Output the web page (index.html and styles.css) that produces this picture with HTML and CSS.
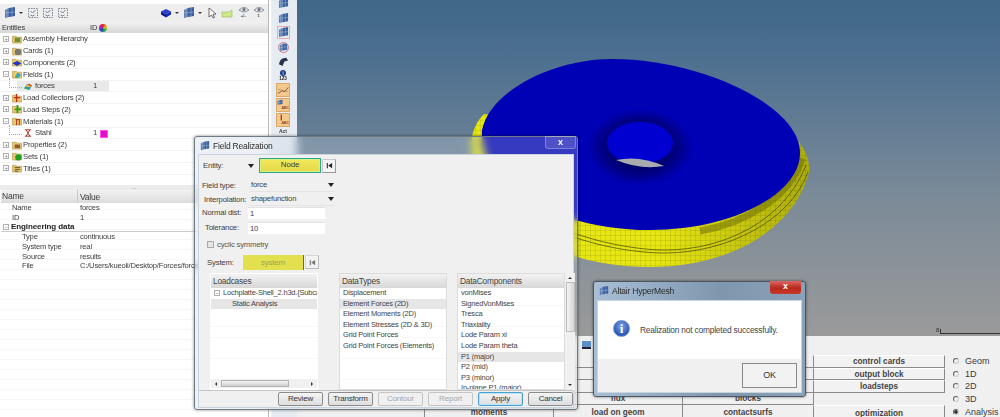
FILE: index.html
```html
<!DOCTYPE html>
<html lang="en">
<head>
<meta charset="utf-8">
<title>Altair HyperMesh</title>
<link rel="stylesheet" href="styles.css">
</head>
<body>
<svg class="defs" width="0" height="0" aria-hidden="true">
  <defs>
    <symbol id="sheet" viewBox="0 0 12 12"><path d="M1 3l4-2v9l-4 1z" fill="#5b7fb5"/><path d="M5 1l6-1v9l-6 1z" fill="#3a5f9c"/><path d="M3 1.500v9M8 .5v9M1 6l10-1" stroke="#9fb4d4" stroke-width=".6" fill="none"/></symbol>
    <symbol id="cube" viewBox="0 0 12 12"><path d="M6 2l5 2.500-5 2.500-5-2.500z" fill="#2c3fd0"/><path d="M1 4.500v3l5 3v-3.500z" fill="#10208f"/><path d="M11 4.500v3l-5 3v-3.500z" fill="#182ab0"/></symbol>
    <symbol id="dash" viewBox="0 0 12 12"><path d="M1.500 1.500h9v9h-9z" fill="none" stroke="#7c8794" stroke-dasharray="1.500 1"/><path d="M3.500 4l2 2 3-3M3.500 8l2 1 2-1" fill="none" stroke="#59636f" stroke-width=".8"/></symbol>
    <symbol id="eye" viewBox="0 0 12 8"><path d="M1 4q5-5 10 0q-5 4-10 0z" fill="#dfe3e6" stroke="#7c8288" stroke-width=".8"/><circle cx="6" cy="3.500" r="1.500" fill="#6a7178"/></symbol>
    <symbol id="folder" viewBox="0 0 11 11"><path d="M.5 2.500h4l1 1h5v6.500h-10z" fill="#e9c76c" stroke="#a98b3a" stroke-width=".6"/></symbol>
    <symbol id="card" viewBox="0 0 11 11"><use href="#folder"/><circle cx="6.500" cy="6.500" r="3.500" fill="#777"/></symbol>
    <symbol id="comp" viewBox="0 0 11 11"><use href="#folder"/><path d="M5.500 4.500l5 2.500-5 3-5-3z" fill="#1f37c0"/></symbol>
    <symbol id="asm" viewBox="0 0 11 11"><use href="#folder"/><path d="M3 4h6v5H3z" fill="#6f8f3e"/></symbol>
    <symbol id="field" viewBox="0 0 11 11"><use href="#folder"/><path d="M3 9l3-5 4 2-3 4z" fill="#37a0c8"/><path d="M3 9l3-2 1 3z" fill="#49b649"/></symbol>
    <symbol id="force" viewBox="0 0 11 11"><path d="M1 8l4-5 5 2-3 5z" fill="#2f8fd0"/><path d="M3 6l3-3 4 2-2 2z" fill="#f0d030"/><path d="M5 4l2-1 3 2-2 1z" fill="#e04a20"/><path d="M1 8l3-1 3 3z" fill="#3cb43c"/></symbol>
    <symbol id="load" viewBox="0 0 11 11"><use href="#folder"/><path d="M5 1v9M2 5h7" stroke="#c02818" stroke-width="1.400"/></symbol>
    <symbol id="step" viewBox="0 0 11 11"><use href="#folder"/><path d="M6 1v9M3 6h7" stroke="#28a028" stroke-width="2"/></symbol>
    <symbol id="mat" viewBox="0 0 11 11"><use href="#folder"/><path d="M4 4h5M5 4v6M8 4v6" stroke="#a03020" stroke-width="1" fill="none"/></symbol>
    <symbol id="steel" viewBox="0 0 11 11"><path d="M2 2h7M2 9h7M3.500 2l4 7M7.500 2l-4 7" stroke="#9c2b22" stroke-width="1" fill="none"/></symbol>
    <symbol id="prop" viewBox="0 0 11 11"><use href="#folder"/><path d="M3 5h6v4H3z" fill="#8a5c3a"/></symbol>
    <symbol id="set" viewBox="0 0 11 11"><use href="#folder"/><circle cx="7" cy="7" r="3.500" fill="#1fa01f"/></symbol>
    <symbol id="title" viewBox="0 0 11 11"><use href="#folder"/><path d="M3 5h6M3 7h6M3 9h4" stroke="#333" stroke-width=".8"/></symbol>
    <symbol id="first" viewBox="0 0 8 8"><path d="M1.500 1v6" stroke="#222" stroke-width="1.200"/><path d="M7 1v6L2.500 4z" fill="#222"/></symbol>
    <pattern id="mesh" width="5" height="5" patternUnits="userSpaceOnUse"><rect width="5" height="5" fill="#e6e612"/><path d="M0 0v5M0 0h5" stroke="#9a9a10" stroke-width=".5"/></pattern>
    <radialGradient id="holeShade"><stop offset=".5" stop-color="#00006a"/><stop offset=".75" stop-color="#000088"/><stop offset="1" stop-color="#0000b4"/></radialGradient>
    <linearGradient id="sideShade" x1="0" x2="1" y1="0" y2="0"><stop offset=".55" stop-color="#000" stop-opacity="0"/><stop offset="1" stop-color="#000" stop-opacity=".25"/></linearGradient>
  </defs>
</svg>

<div class="app">
  <aside class="side">
    <div class="panel">
      <div class="toolbar">
        <svg class="tb"><use href="#sheet"/></svg><span class="drop"></span>
        <svg class="tb"><use href="#dash"/></svg><svg class="tb"><use href="#dash"/></svg><svg class="tb"><use href="#dash"/></svg>
        <span class="grow"></span>
        <svg class="tb"><use href="#cube"/></svg><span class="drop"></span>
        <svg class="tb"><use href="#sheet"/></svg><span class="drop"></span>
        <svg class="tb" viewBox="0 0 12 12"><path d="M3 1v9l2.500-2 1.500 3 1.500-.7-1.500-3 3-.3z" fill="#fff" stroke="#333" stroke-width=".7"/></svg>
        <svg class="tb" viewBox="0 0 12 12"><path d="M1 5h7l3-2v7H1z" fill="#cfe88a" stroke="#98b45a" stroke-width=".6"/></svg>
        <span class="eyebox"><svg class="eye"><use href="#eye"/></svg><i>+/–</i></span>
        <span class="eyebox"><svg class="eye"><use href="#eye"/></svg><i>1</i></span>
      </div>
      <div class="treehead"><span class="th-name">Entities</span><span class="th-id">ID</span><span class="wheel"></span></div>
      <div class="tree">
        <div class="row"><b class="exp">+</b><svg class="ic"><use href="#asm"/></svg><span class="lbl">Assembly Hierarchy</span></div>
        <div class="row"><b class="exp">+</b><svg class="ic"><use href="#card"/></svg><span class="lbl">Cards (1)</span></div>
        <div class="row"><b class="exp">+</b><svg class="ic"><use href="#comp"/></svg><span class="lbl">Components (2)</span></div>
        <div class="row"><b class="exp">–</b><svg class="ic"><use href="#field"/></svg><span class="lbl">Fields (1)</span></div>
        <div class="row child sel"><svg class="ic"><use href="#force"/></svg><span class="lbl">forces</span><span class="idv">1</span></div>
        <div class="row"><b class="exp">+</b><svg class="ic"><use href="#load"/></svg><span class="lbl">Load Collectors (2)</span></div>
        <div class="row"><b class="exp">+</b><svg class="ic"><use href="#step"/></svg><span class="lbl">Load Steps (2)</span></div>
        <div class="row"><b class="exp">–</b><svg class="ic"><use href="#mat"/></svg><span class="lbl">Materials (1)</span></div>
        <div class="row child"><svg class="ic"><use href="#steel"/></svg><span class="lbl">Stahl</span><span class="idv">1</span><span class="swatch"></span></div>
        <div class="row"><b class="exp">+</b><svg class="ic"><use href="#prop"/></svg><span class="lbl">Properties (2)</span></div>
        <div class="row"><b class="exp">+</b><svg class="ic"><use href="#set"/></svg><span class="lbl">Sets (1)</span></div>
        <div class="row"><b class="exp">+</b><svg class="ic"><use href="#title"/></svg><span class="lbl">Titles (1)</span></div>
      </div>
      <div class="sash">...</div>
      <div class="props">
        <div class="prophead"><span class="pn">Name</span><span class="pv">Value</span></div>
        <div class="prow"><span class="pn ind1">Name</span><span class="pv">forces</span></div>
        <div class="prow"><span class="pn ind1">ID</span><span class="pv">1</span></div>
        <div class="prow group"><b class="exp">–</b><strong>Engineering data</strong></div>
        <div class="prow"><span class="pn ind2">Type</span><span class="pv">continuous</span></div>
        <div class="prow"><span class="pn ind2">System type</span><span class="pv">real</span></div>
        <div class="prow"><span class="pn ind2">Source</span><span class="pv">results</span></div>
        <div class="prow"><span class="pn ind2">File</span><span class="pv">C:/Users/kueoli/Desktop/Forces/forces.csv</span></div>
      </div>
    </div>
    <div class="strip">
      <svg class="si"><use href="#sheet"/></svg>
      <svg class="si"><use href="#sheet"/></svg>
      <svg class="si ringed"><use href="#sheet"/></svg>
      <svg class="si circled"><use href="#sheet"/></svg>
      <svg class="si small" viewBox="0 0 12 12"><path d="M1 9q1-7 8-7l2 3-4 1-2 5z" fill="#26324e"/></svg>
      <span class="info-s">i</span>
      <span class="num">123</span>
      <span class="orange"><svg viewBox="0 0 14 14"><path d="M1 11l5-3 3 1 4-5" stroke="#8a4a2a" fill="none"/><path d="M1 6l12 3" stroke="#777" stroke-width=".6"/></svg></span>
      <span class="orange abc"><svg viewBox="0 0 14 7"><use href="#sheet" width="7" height="7"/></svg>ABC</span>
      <span class="orange abc"><svg viewBox="0 0 14 7"><path d="M5 0v7" stroke="#b02418" stroke-width="1.400"/></svg>ABC</span>
      <span class="abc-plain">Act</span>
    </div>
  </aside>

  <main class="work">
    <div class="view">
      <svg class="model" viewBox="0 0 703 336" width="703" height="336" aria-hidden="true">
        <g transform="translate(-297 0)">
          <path d="M484 114C468 130 468 152 480 182C502 240 580 267 650 267C722 267 792 235 809 172C810 160 805 150 799 142Z" fill="url(#mesh)"/>
          <path d="M484 114C468 130 468 152 480 182C502 240 580 267 650 267C722 267 792 235 809 172C810 160 805 150 799 142Z" fill="url(#sideShade)"/>
          <path d="M700 231C750 222 792 194 802 158" fill="none" stroke="#70700a" stroke-width="7" opacity=".55"/>
          <path d="M560 228C600 244 640 250 665 250C725 250 785 220 806 165M560 232C600 248 640 253 665 253C725 253 790 222 808 172" fill="none" stroke="#55550a" stroke-width=".8"/>
          <path d="M482 130C490 90 555 59 612 59C700 59 800 105 800 153C800 195 730 230 650 230C560 230 478 188 482 130Z" fill="#0000b4"/>
          <ellipse cx="640" cy="147" rx="52" ry="38" fill="url(#holeShade)"/>
          <ellipse cx="640" cy="143" rx="33" ry="21" fill="#0000d0"/>
          <path d="M616 160Q640 155 664 166Q640 170 616 160Z" fill="#a8acae"/>
        </g>
      </svg>
      <div class="scale"><span>8</span><i></i></div>
    </div>
    <div class="bottom">
      <span class="monitor"></span>
      <div class="grid">
        <span class="cell"></span><span class="cell"></span><span class="cell"></span><span class="cell raised">control cards</span>
        <span class="cell"></span><span class="cell"></span><span class="cell"></span><span class="cell raised">output block</span>
        <span class="cell"></span><span class="cell"></span><span class="cell"></span><span class="cell raised">loadsteps</span>
        <span class="cell"></span><span class="cell">flux</span><span class="cell">blocks</span><span class="cell none"></span>
        <span class="cell last">moments</span><span class="cell last">load on geom</span><span class="cell last">contactsurfs</span><span class="cell raised last">optimization</span>
      </div>
      <div class="radios">
        <div class="radio"><i></i>Geom</div>
        <div class="radio"><i></i>1D</div>
        <div class="radio"><i></i>2D</div>
        <div class="radio"><i></i>3D</div>
        <div class="radio on"><i></i>Analysis</div>
      </div>
    </div>
  </main>

  <section class="win field">
    <header class="title"><svg class="tic"><use href="#sheet"/></svg><span>Field Realization</span><span class="x glassx">x</span></header>
    <div class="client">
      <div class="form">
        <div class="f-row entity"><label>Entity:</label><span class="arrow lone"></span><span class="node">Node</span><span class="mini"><svg><use href="#first"/></svg></span></div>
        <div class="f-row ftype"><label>Field type:</label><span class="sel-box">force<span class="arrow"></span></span></div>
        <div class="f-row interp"><label>Interpolation:</label><span class="sel-box">shapefunction<span class="arrow"></span></span></div>
        <div class="f-row normal"><label>Normal dist:</label><span class="input">1</span></div>
        <div class="f-row toler"><label>Tolerance:</label><span class="input">10</span></div>
        <div class="f-row cyclic"><span class="check"></span><span>cyclic symmetry</span></div>
        <div class="f-row system"><label>System:</label><span class="sys">system</span><span class="mini dim"><svg><use href="#first"/></svg></span></div>
      </div>
      <div class="lists">
        <div class="list lc">
          <div class="lh">Loadcases</div>
          <div class="li lead"><b class="exp">–</b>Lochplatte-Shell_2.h3d.{Subcase</div>
          <div class="li on sub">Static Analysis</div>
          <div class="hscroll"><i class="l"></i><span></span><i class="r"></i></div>
        </div>
        <div class="list dt">
          <div class="lh">DataTypes</div>
          <div class="li">Displacement</div>
          <div class="li on">Element Forces (2D)</div>
          <div class="li">Element Moments (2D)</div>
          <div class="li">Element Stresses (2D &amp; 3D)</div>
          <div class="li">Grid Point Forces</div>
          <div class="li">Grid Point Forces (Elements)</div>
        </div>
        <div class="list dc">
          <div class="lh">DataComponents</div>
          <div class="li">vonMises</div>
          <div class="li">SignedVonMises</div>
          <div class="li">Tresca</div>
          <div class="li">Triaxiality</div>
          <div class="li">Lode Param xi</div>
          <div class="li">Lode Param theta</div>
          <div class="li on">P1 (major)</div>
          <div class="li">P2 (mid)</div>
          <div class="li">P3 (minor)</div>
          <div class="li">In-plane P1 (major)</div>
        </div>
        <div class="vscroll"><i class="u"></i><span></span><i class="d"></i></div>
      </div>
      <div class="foot">
        <span class="btn">Review</span><span class="btn">Transform</span><span class="btn off">Contour</span><span class="btn off">Report</span><span class="btn primary">Apply</span><span class="btn">Cancel</span>
      </div>
    </div>
  </section>

  <section class="win msg">
    <header class="title"><svg class="tic"><use href="#sheet"/></svg><span>Altair HyperMesh</span><span class="x redx">x</span></header>
    <div class="client">
      <div class="msgbody"><span class="info">i</span><span>Realization not completed successfully.</span></div>
      <div class="msgfoot"><span class="okbtn">OK</span></div>
    </div>
  </section>
</div>
</body>
</html>
```

FILE: styles.css
```css
* { box-sizing: border-box; }
html, body { margin: 0; padding: 0; }
body { font-family: "Liberation Sans", Arial, sans-serif; font-size: 7.700px; letter-spacing: -.2px; color: #3c3c3c; background: #fff; overflow: hidden; }
.defs { position: absolute; }
.app { position: relative; width: 1000px; height: 417px; overflow: hidden; display: flex; filter: blur(.4px); }

/* left side */
.side { width: 297px; height: 417px; display: flex; flex: none; }
.panel { width: 269px; flex: none; display: flex; flex-direction: column; background: #fff; border-right: 1px solid #b8b8b8; }
.toolbar { height: 18px; margin-top: 4px; background: #eeeeee; display: flex; align-items: center; padding: 0 2px 0 4px; }
.tb { width: 12px; height: 12px; flex: none; margin-right: 3px; }
.drop { width: 4px; height: 2px; flex: none; border: 2px solid transparent; border-top: 2px solid #333; border-bottom: 0; margin-right: 4px; }
.grow { flex: 1; }
.eyebox { width: 15px; height: 15px; display: flex; flex-direction: column; align-items: center; font-size: 4px; line-height: 4px; font-weight: bold; letter-spacing: 0; }
.eyebox i { font-style: normal; }
.eye { width: 12px; height: 8px; }
.treehead { height: 11px; background: linear-gradient(#f2f2f2, #d6d6d6); display: flex; align-items: center; font-size: 7.500px; }
.th-name { width: 90px; padding-left: 2px; }
.th-id { width: 9px; }
.wheel { width: 8px; height: 8px; border-radius: 50%; background: conic-gradient(#e02020, #e0c020, #20b040, #2040d0, #c020c0, #e02020); }
.tree { height: 142px; padding-top: .6px; }
.row { height: 11.750px; display: flex; align-items: center; border-bottom: 1px solid #f3f3f3; padding-left: 3px; position: relative; }
.exp { width: 6px; height: 6px; border: 1px solid #b0b0b0; font-size: 5px; line-height: 4px; text-align: center; font-weight: normal; color: #666; flex: none; margin-right: 3px; background: #fff; }
.ic { width: 10px; height: 10px; flex: none; margin-right: 1px; }
.lbl { white-space: nowrap; }
.row.child { padding-left: 23px; }
.row.child .ic { margin-right: 2px; }
.row.child::before { content: ""; position: absolute; left: 9px; top: -3px; width: 12px; height: 9px; border-left: 1px dotted #aaa; border-bottom: 1px dotted #aaa; }
.row.sel { background: linear-gradient(#e9e9e9, #e9e9e9) 17px 0 / 92px 100% no-repeat; }
.idv { position: absolute; left: 93px; }
.swatch { position: absolute; left: 100px; top: 2px; width: 8px; height: 8px; background: #e010c8; border: 1px solid #ff50f0; }
.sash { height: 15px; text-align: center; line-height: 8px; padding-top: 8px; color: #777; font-size: 6px; background: linear-gradient(#fff 0 10px, #ececec 10px); }
.props { flex: 1; padding-left: 1px; background: repeating-linear-gradient(#fff 0 9px, #f7f7f7 9px 10px); }
.prophead { height: 13px; background: linear-gradient(#f2f2f2, #dcdcdc); display: flex; align-items: center; font-size: 8.500px; }
.prophead .pn { width: 77px; padding-left: 1px; border-right: 1px solid #c8c8c8; height: 13px; line-height: 13px; }
.prophead .pv { padding-left: 2px; }
.prow { height: 9.700px; display: flex; align-items: center; white-space: nowrap; font-size: 7.600px; }
.pn { display: block; }
.prow .pn { width: 79px; }
.ind1 { padding-left: 11px; }
.ind2 { padding-left: 21px; }
.prow.group { border-bottom: 1px solid #ccc; padding-left: 2px; font-size: 8px; letter-spacing: -.1px; color: #222; }
.prow.group .exp { margin-right: 2px; }
.strip { flex: 1; background: linear-gradient(90deg, #fff 0 1px, #e7ecf2 3px); display: flex; flex-direction: column; align-items: center; padding: 0; margin-top: -2px; letter-spacing: 0; }
.si { width: 11px; height: 11px; flex: none; margin-bottom: 3.500px; }
.si.small { margin-bottom: 2px; }
.si.ringed { outline: 1px solid #eaa8b0; }
.si.circled { border: 1px solid #c87890; border-radius: 50%; }
.info-s { width: 6px; height: 6px; border-radius: 50%; background: #1c3f90; color: #fff; font-size: 5px; line-height: 6px; text-align: center; margin-top: 1px; flex: none; }
.num { font-size: 4.500px; line-height: 6px; font-weight: bold; color: #222; flex: none; }
.orange { width: 14px; height: 14px; background: #f4c98c; border: 1px solid #dda868; display: block; margin-top: 1px; flex: none; }
.orange svg { display: block; width: 12px; height: 12px; }
.orange.abc { font-size: 3.500px; font-weight: bold; line-height: 4px; color: #8a3a20; text-align: right; }
.orange.abc svg { height: 7px; }
.abc-plain { font-size: 5px; font-weight: bold; margin-top: 1px; flex: none; }

/* graphics area */
.work { flex: 1; display: flex; flex-direction: column; height: 417px; min-width: 0; }
.view { height: 336px; position: relative; background: linear-gradient(#3e6788 0, #4e7090 60px, #7c8b98 200px, #9a9a9a 336px); }
.model { display: block; }
.scale { position: absolute; left: 639px; top: 327px; display: flex; align-items: flex-end; color: #333; font-size: 6px; line-height: 7px; }
.scale i { display: block; width: 70px; height: 5px; margin-left: 1px; border-left: 1px solid #333; border-bottom: 1px solid #333; }
.bottom { flex: 1; position: relative; background: #f0f0f0; padding: 19px 0 0 127px; display: flex; letter-spacing: 0; }
.monitor { position: absolute; left: 285px; top: 5px; width: 9px; height: 8px; background: #5b8fc8; border-bottom: 2px solid #223; }
.grid { display: grid; grid-template-columns: 129px 129px 131px 132px; grid-auto-rows: 12.600px; width: 521px; flex: none; }
.cell { border-left: 1px solid #8a8a8a; border-bottom: 1px solid #8a8a8a; text-align: center; font-size: 8.200px; line-height: 11px; font-weight: bold; color: #444; }
.cell.none { border-bottom: 0; }
.cell.last { padding-top: 2px; }
.cell.raised { background: #f2f2f2; border-top: 1px solid #fff; border-right: 1px solid #888; }
.radios { padding-left: 7px; }
.radio { height: 12.600px; display: flex; align-items: center; font-size: 9px; color: #3a3a3a; white-space: nowrap; }
.radio.on { padding-top: 1px; }
.radio i { width: 6px; height: 6px; border-radius: 50%; border: 1px solid #ccc; border-top-color: #666; border-left-color: #666; margin: 0 6px 0 1px; flex: none; }
.radio.on i { background: radial-gradient(#333 0 1.500px, #fff 2px); }

/* windows */
.win { position: absolute; display: flex; flex-direction: column; border-radius: 3px; border: 1px solid #4b5661; backdrop-filter: blur(4px); box-shadow: 0 0 3px rgba(0,0,0,.5); padding: 0 3px 1px; }
.field { left: 194px; top: 136px; width: 384px; height: 274px; border-color: #6e7a84; background: rgba(195,210,225,.28); }
.msg { left: 593px; top: 281px; width: 213px; height: 116px; padding: 0 3px 3px; background: linear-gradient(90deg, #a8bfd6, #7f97ad 60%, #8aa2b8); }
.title { height: 17px; display: flex; align-items: center; flex: none; font-size: 8.500px; color: #2a2a2a; padding-left: 2px; position: relative; }
.msg .title { height: 18px; font-size: 8.500px; }
.tic { width: 10px; height: 10px; margin-right: 3px; flex: none; }
.x { position: absolute; top: -1px; right: -2px; width: 31px; height: 13px; text-align: center; color: #fff; font-weight: bold; font-size: 9px; line-height: 11px; }
.glassx { background: rgba(255,255,255,.12); border: 1px solid rgba(255,255,255,.28); border-radius: 0 0 3px 3px; }
.redx { background: linear-gradient(#d66, #b8281c 55%, #c83a2a); right: 1px; border-radius: 0 0 3px 3px; }
.client { flex: 1; background: #f0f0f0; border: 1px solid #c8d4e0; display: flex; flex-direction: column; min-height: 0; }

.form { height: 118px; flex: none; padding: 3px 0 0 3px; display: flex; flex-direction: column; font-size: 7.700px; color: #3f3f3f; }
.f-row { display: flex; align-items: center; white-space: nowrap; flex: none; }
.f-row label { display: block; font-size: 7.800px; }
.entity { height: 15px; padding-left: 1px; }
.entity label { width: 42px; }
.node { width: 62px; height: 15px; background: linear-gradient(#f0e85a, #e6d84a); border: 1px solid #2aa88e; box-shadow: inset 0 0 0 1px #d8f080; text-align: center; line-height: 12px; margin-right: 1px; font-size: 8px; }
.mini { width: 14px; height: 14px; background: #f4f4f4; border: 1px solid #c8c8c8; border-bottom-color: #999; border-right-color: #999; display: flex; align-items: center; justify-content: center; }
.mini svg { width: 7px; height: 7px; }
.mini.dim { opacity: .6; }
.arrow { width: 0; height: 0; border: 3px solid transparent; border-top: 4px solid #222; border-bottom: 0; position: absolute; right: 1px; top: 5px; }
.arrow.lone { position: static; margin: 0 5px 0 3px; }
.ftype { height: 14px; margin-top: 5px; }
.ftype label { width: 48px; }
.interp { height: 14px; padding-left: 2px; }
.interp label { width: 46px; }
.sel-box { display: block; position: relative; width: 85px; height: 14px; line-height: 14px; padding-left: 1px; border-bottom: 1px solid #e4e4e4; }
.normal { height: 13px; }
.normal label { width: 46px; }
.toler { height: 13px; margin-top: 2px; padding-left: 3px; }
.toler label { width: 43px; }
.input { display: block; width: 77px; height: 12px; line-height: 12px; background: #fff; border-top: 1px solid #e2e2e2; padding-left: 2px; }
.cyclic { height: 12px; margin-top: 4px; padding-left: 5px; color: #555; }
.check { width: 7px; height: 7px; border: 1px solid #aaa; background: #e4e4e4; margin-right: 3px; }
.system { height: 16px; margin-top: 4px; padding-left: 5px; }
.system label { width: 36px; }
.sys { width: 61px; height: 15px; background: #e2e04e; text-align: center; line-height: 15px; color: #a0a050; border-right: 1px solid #666; margin-right: 1px; font-size: 8px; }

.lists { flex: 1; display: flex; position: relative; padding-left: 11px; min-height: 0; }
.list { width: 108px; height: 117px; overflow: hidden; background: repeating-linear-gradient(#fff 0 10px, #f8f8f8 10px 10.600px); border: 1px solid #dcdcdc; font-size: 7.500px; color: #444; position: relative; flex: none; }
.lc { margin-right: 21px; border-color: transparent; }
.dt { margin-right: 10px; }
.lh { height: 14px; line-height: 14px; padding-left: 2px; background: linear-gradient(#f2f2f2, #d8d8d8); font-size: 8.300px; }
.li { height: 10.600px; line-height: 10.600px; padding-left: 3px; white-space: nowrap; overflow: hidden; }
.li.on { background: #e6e6e6; }
.li.lead { display: flex; align-items: center; }
.li.lead .exp { margin-right: 3px; }
.li.sub { padding-left: 21px; }
.hscroll { position: absolute; left: 0; right: 0; bottom: 1px; height: 9px; background: #f0f0f0; }
.hscroll span { position: absolute; left: 10px; width: 68px; top: 1px; height: 7px; background: linear-gradient(#f4f4f4, #cfcfcf); border: 1px solid #b4b4b4; }
.hscroll i { position: absolute; top: 3px; width: 0; height: 0; border: 2px solid transparent; }
.hscroll .l { left: 2px; border-right-color: #333; }
.hscroll .r { right: 2px; border-left-color: #333; }
.vscroll { width: 10px; height: 117px; position: relative; background: #f0f0f0; flex: none; }
.vscroll span { position: absolute; left: 1px; right: 0; top: 9px; height: 50px; background: linear-gradient(90deg, #f4f4f4, #d4d4d4); border: 1px solid #bcbcbc; }
.vscroll i { position: absolute; left: 3px; width: 0; height: 0; border: 2px solid transparent; }
.vscroll .u { top: 2px; border-bottom-color: #333; }
.vscroll .d { bottom: 2px; border-top-color: #333; }
.foot { height: 17px; flex: none; display: flex; align-items: center; justify-content: flex-end; gap: 5px; padding-right: 0; border-top: 1px solid #c4c4c4; }
.btn { width: 45px; height: 14px; line-height: 12px; text-align: center; font-size: 8px; color: #333; background: linear-gradient(#f4f4f4, #dedede); border: 1px solid #8c8c8c; border-radius: 2px; }
.btn.off { color: #a8a8a8; background: #f0f0f0; border-color: #c4c4c4; }
.btn.primary { border-color: #4aa0d0; box-shadow: inset 0 0 0 1px #b8e4f4; }

.msgbody { height: 58px; flex: none; background: #fff; display: flex; align-items: center; padding-left: 15px; font-size: 8.400px; color: #444; white-space: nowrap; }
.info { width: 17px; height: 17px; border-radius: 50%; background: radial-gradient(circle at 50% 35%, #7fa4e4, #2a56b8 70%); border: 1px solid #6d8fd0; color: #fff; font-family: "Liberation Serif", serif; font-weight: bold; font-size: 13px; line-height: 15px; text-align: center; margin: 0 10px 4px 0; flex: none; }
.msgfoot { flex: 1; background: #f0f0f0; display: flex; justify-content: flex-end; align-items: center; padding-right: 4px; }
.okbtn { width: 55px; height: 25px; border: 1px solid #8a8a8a; background: #f2f2f2; text-align: center; line-height: 23px; font-size: 9px; color: #333; }
```
